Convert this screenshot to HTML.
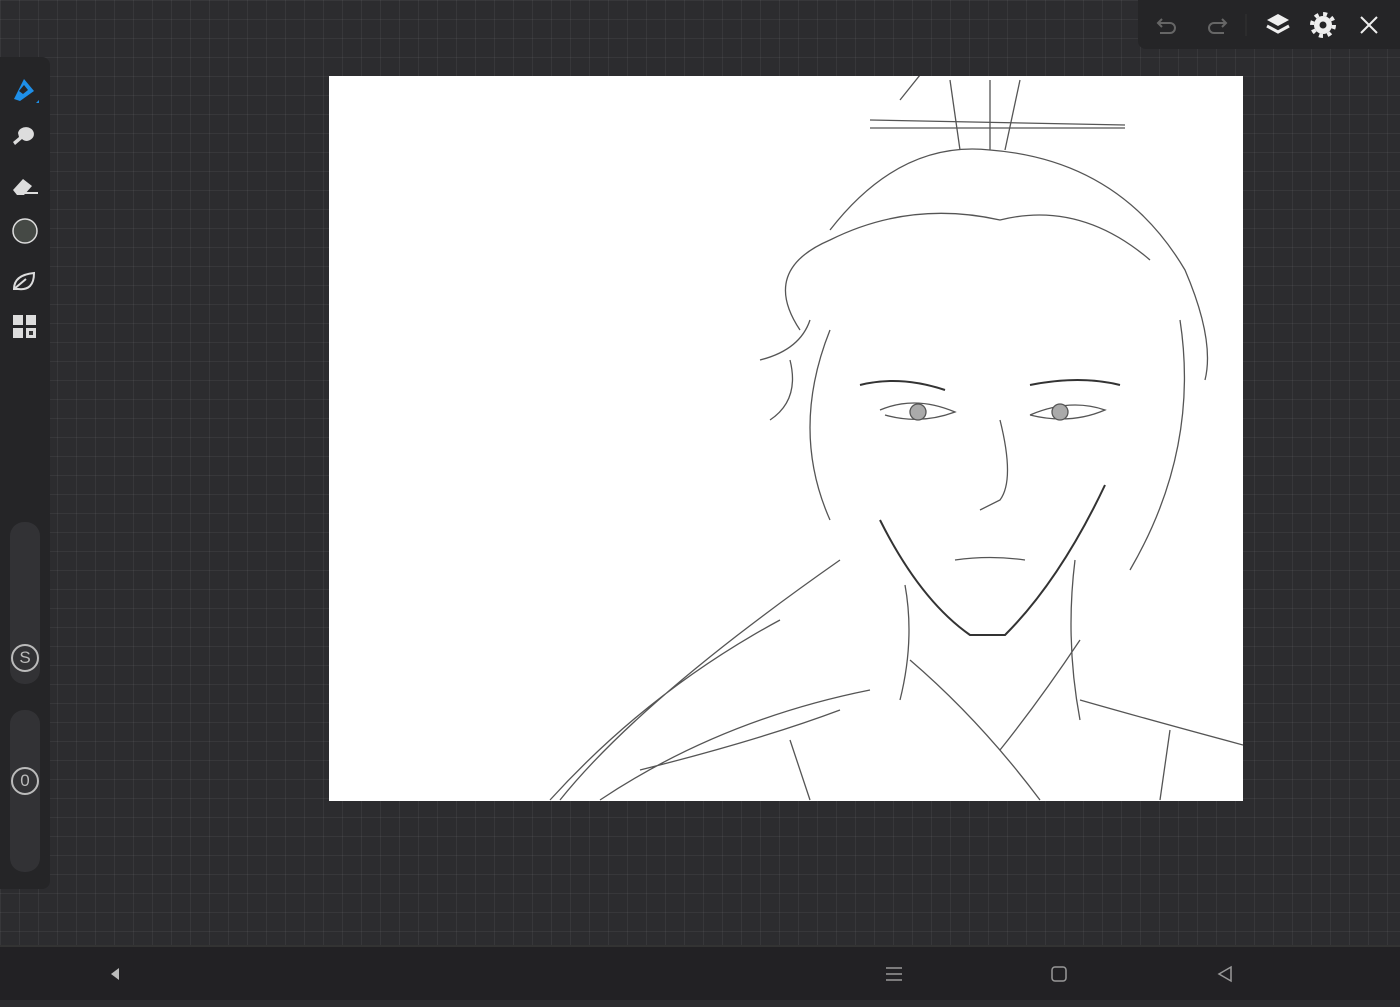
<!DOCTYPE html>
<html><head><meta charset="utf-8"><style>
*{margin:0;padding:0;box-sizing:border-box}
body{width:1400px;height:1000px;overflow:hidden;background:#2c2c2f;font-family:"Liberation Sans",sans-serif;position:relative}
.grid{position:absolute;left:0;top:0;width:1400px;height:945px;
background-image:linear-gradient(to right,rgba(255,255,255,.05) 1px,transparent 1px),linear-gradient(to bottom,rgba(255,255,255,.05) 1px,transparent 1px);
background-size:19px 19px}
.side{position:absolute;left:0;top:57px;width:50px;height:832px;background:#252527;border-radius:0 8px 8px 0}
.top{position:absolute;left:1138px;top:0;width:262px;height:49px;background:#252527;border-radius:0 0 0 8px}
.pill{position:absolute;left:10px;width:30px;background:#323235;border-radius:14px}
.circ{position:absolute;left:11px;width:28px;height:28px;border:2px solid #bbb;border-radius:50%;color:#bbb;font-size:17px;text-align:center;line-height:24px}
.canvas{position:absolute;left:329px;top:76px;width:914px;height:725px;background:#fff;overflow:hidden}
.bar{position:absolute;left:0;top:945px;width:1400px;height:55px;background:#222124;border-top:2px solid #333}
</style></head><body>
<div class="grid"></div>
<div class="side">
 <svg style="position:absolute;left:0;top:0" width="50" height="300" viewBox="0 0 50 300">
  <path d="M14 42 L24 22 L34 34 L20 44 Z M19 34 l5 -6 l4 5 l-5 4z" fill="#1e8fe8" fill-rule="evenodd"/>
  <path d="M36 46 l3 -3 v3z" fill="#1e8fe8"/>
  <path d="M18 76 a8 7 0 1 1 9 8 q-3 0 -5 -2 l-7 6 l-2 -3 l6 -5z" fill="#ddd"/>
  <path d="M13 133 l10 -11 l9 7 l-8 9 h-7z" fill="#ddd"/><path d="M20 136 h18" stroke="#ddd" stroke-width="2"/>
  <circle cx="25" cy="174" r="12" fill="#454945" stroke="#ddd" stroke-width="1.5"/>
  <path d="M14 232 q0 -14 20 -16 q0 18 -16 16 z M14 232 l12 -10" stroke="#ddd" stroke-width="2" fill="none"/>
  <rect x="13" y="258" width="10" height="10" fill="#ddd"/><rect x="26" y="258" width="10" height="10" fill="#ddd"/>
  <rect x="13" y="271" width="10" height="10" fill="#ddd"/><rect x="26" y="271" width="10" height="10" fill="#ddd"/><rect x="29" y="274" width="4" height="4" fill="#333"/>
 </svg>
 <div class="pill" style="top:465px;height:162px"></div>
 <div class="circ" style="top:587px">S</div>
 <div class="pill" style="top:653px;height:162px"></div>
 <div class="circ" style="top:710px">0</div>
</div>
<div class="top">
 <svg width="262" height="49" viewBox="1138 0 262 49">
  <path d="M1162 19 l-4 4 l4 4 M1158 23 h12 a5 5 0 0 1 0 10 h-10" stroke="#666" stroke-width="2" fill="none"/>
  <path d="M1222 19 l4 4 l-4 4 M1226 23 h-12 a5 5 0 0 0 0 10 h10" stroke="#666" stroke-width="2" fill="none"/>
  <line x1="1246" y1="14" x2="1246" y2="36" stroke="#333" stroke-width="1"/>
  <path d="M1278 14 l11 6 l-11 6 l-11 -6z" fill="#eee"/><path d="M1267 26 l11 6 l11 -6" stroke="#eee" stroke-width="3" fill="none"/>
  <circle cx="1323" cy="25" r="9" fill="#eee"/><circle cx="1323" cy="25" r="11" fill="none" stroke="#eee" stroke-width="4" stroke-dasharray="4 4.6"/><circle cx="1323" cy="25" r="3.5" fill="#252527"/>
  <path d="M1361 17 l16 16 M1377 17 l-16 16" stroke="#eee" stroke-width="2"/>
 </svg>
</div>
<div class="canvas">
 <svg width="914" height="725" viewBox="329 76 914 725" fill="none" stroke="#555" stroke-width="1.3">
  <path d="M870 120 L1125 125 M870 128 L1125 128"/>
  <path d="M900 100 l20 -25 M950 80 l10 70 M990 80 l0 70 M1020 80 l-15 70"/>
  <path d="M830 230 Q900 140 990 150 Q1120 160 1185 270 Q1215 340 1205 380"/>
  <path d="M800 330 Q760 270 830 240 Q910 200 1000 220 Q1080 200 1150 260"/>
  <path d="M830 330 Q790 430 830 520 M1180 320 Q1200 450 1130 570"/>
  <path d="M860 385 Q900 375 945 390 M1030 385 Q1080 375 1120 385" stroke="#333" stroke-width="2"/>
  <path d="M880 410 Q915 395 955 412 Q920 425 885 415 M1030 415 Q1070 398 1105 410 Q1070 425 1030 415"/>
  <circle cx="918" cy="412" r="8" fill="#aaa"/><circle cx="1060" cy="412" r="8" fill="#aaa"/>
  <path d="M1000 420 Q1015 480 1000 500 L980 510 M955 560 Q990 555 1025 560"/>
  <path d="M880 520 Q920 600 970 635 L1005 635 Q1060 580 1105 485" stroke="#333" stroke-width="2"/>
  <path d="M905 585 Q915 640 900 700 M1075 560 Q1065 640 1080 720"/>
  <path d="M910 660 Q980 720 1040 800 M1080 640 Q1040 700 1000 750 M1080 700 Q1150 720 1243 745"/>
  <path d="M560 800 Q640 700 840 560 M550 800 Q650 690 780 620 M600 800 Q720 720 870 690 M640 770 Q760 740 840 710"/>
  <path d="M790 740 L810 800 M1170 730 L1160 800"/>
  <path d="M760 360 Q800 350 810 320 M770 420 Q800 400 790 360"/>
 </svg>
</div>
<div class="bar">
 <svg width="1400" height="55" viewBox="0 945 1400 55">
  <path d="M119 966 v12 l-8 -6z" fill="#bbb"/>
  <path d="M886 966 h16 M886 972 h16 M886 978 h16" stroke="#999" stroke-width="1.5"/>
  <rect x="1052" y="965" width="14" height="14" rx="3" stroke="#999" stroke-width="1.5" fill="none"/>
  <path d="M1231 965 v14 l-12 -7z" stroke="#999" stroke-width="1.5" fill="none"/>
 </svg>
</div>
</body></html>
